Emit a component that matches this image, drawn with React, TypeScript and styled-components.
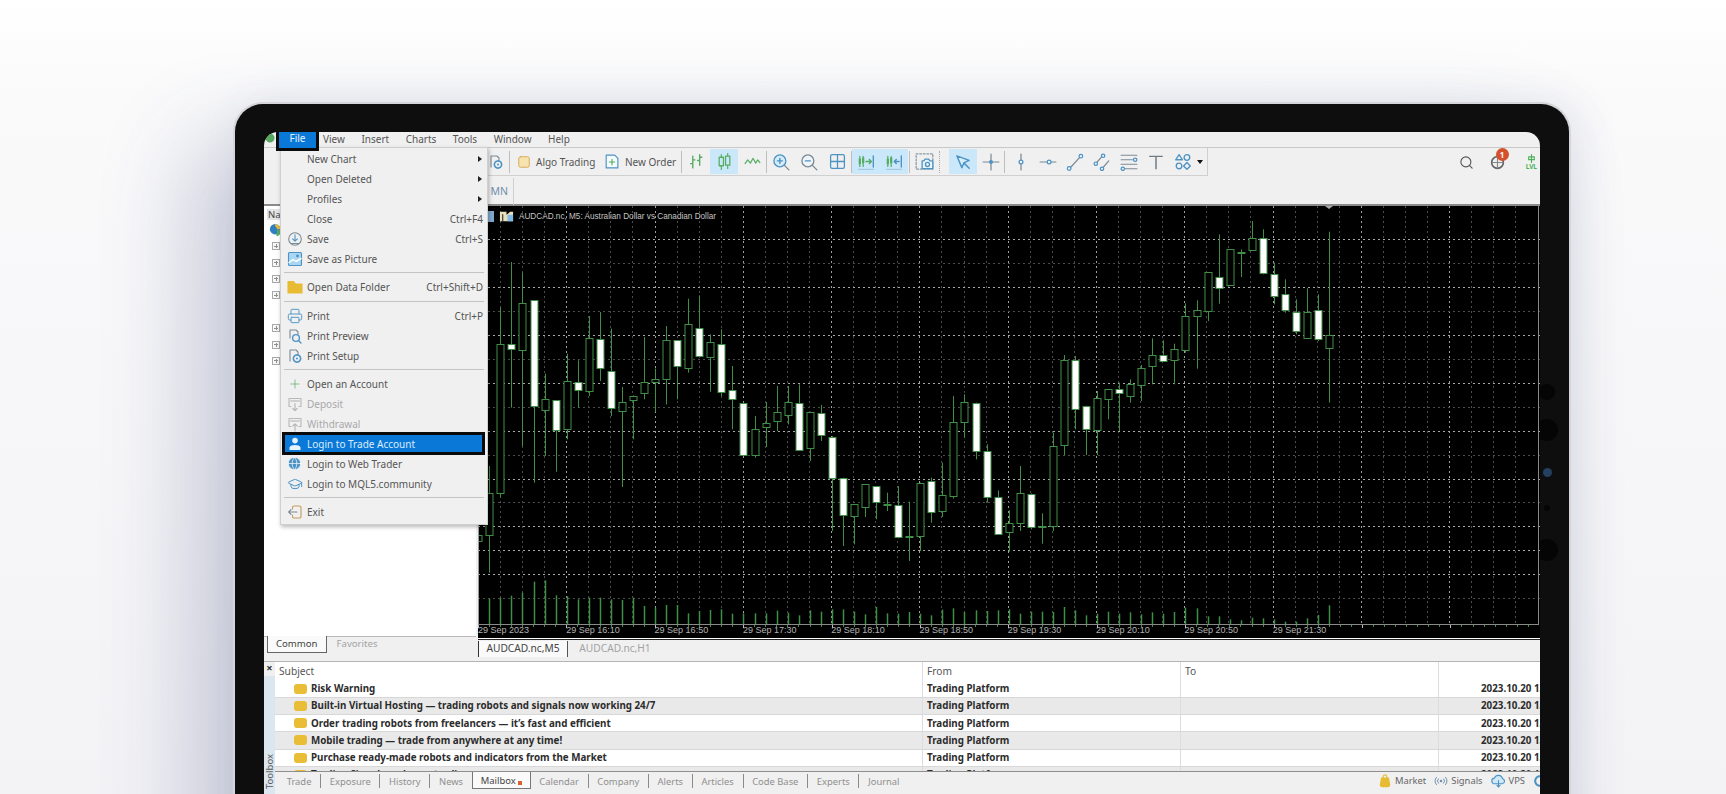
import React, { FC, ReactNode } from 'react'
import styled, { createGlobalStyle } from 'styled-components'
import { Globe, GraduationCap, Plus, Printer, Search } from 'lucide-react'

const UI_FONT = '"Noto Sans", "Open Sans", sans-serif'

const GlobalStyle = createGlobalStyle`
  html, body {
    margin: 0;
    height: 100%;
    overflow: hidden;
    background: #fff;
  }
  * { box-sizing: border-box; }
`

const Page = styled.div`
  width: 1726px;
  height: 794px;
  overflow: hidden;
  padding: 102px 0 0 233px;
  background: linear-gradient(180deg, #ffffff 0%, #fafafb 12%, #f3f3f6 100%);
  font-family: ${UI_FONT};
`

const Device = styled.div`
  position: relative;
  width: 1338px;
  height: 760px;
  padding: 28px 29px 0 29px;
  background: #0e0e0e;
  border: 2px solid #d6d6da;
  border-bottom: 0;
  border-radius: 30px 30px 0 0;
  box-shadow: -40px 40px 90px rgba(70, 80, 130, 0.28), 10px 0 40px rgba(70, 80, 130, 0.1);
`

const BezelDot = styled.span<{ $top: number; $size: number; $blue?: boolean }>`
  position: absolute;
  top: ${p => p.$top}px;
  left: ${p => 1312 - p.$size / 2}px;
  width: ${p => p.$size}px;
  height: ${p => p.$size}px;
  border-radius: 50%;
  background: ${p => (p.$blue ? '#24405e' : '#050505')};
`

const Screen = styled.div`
  position: relative;
  width: 1276px;
  height: 662px;
  display: flex;
  flex-direction: column;
  overflow: hidden;
  border-radius: 14px 14px 0 0;
  background: #f0f0f0;
`

/* menu bar */
const MenuBar = styled.div`
  height: 16px;
  display: flex;
  align-items: center;
  flex: none;
  padding-bottom: 2px;
  border-bottom: 1px solid #c9c9c9;
  font-size: 10px;
  color: #555;
`

const AppLogo = styled.span`
  width: 12px;
  height: 15px;
  flex: none;
  background: radial-gradient(circle at 6px 7px, #58a861 0 4px, transparent 5px);
`

const FileItem = styled.span`
  width: 43px;
  height: 19px;
  flex: none;
  align-self: flex-start;
  position: relative;
  z-index: 3;
  display: flex;
  align-items: center;
  justify-content: center;
  padding-bottom: 4px;
  margin-right: 4px;
  background: #0a78d7;
  border: solid #0a0a0a;
  border-width: 0 3px 3px 3px;
  color: #e8f3fd;
`

const MenuLabel = styled.span`
  margin-right: 16.5px;
`

/* toolbars */
const Toolbar = styled.div`
  height: 30px;
  flex: none;
  display: flex;
  align-items: center;
  padding: 0 0 2px 218px;
  font-size: 10px;
  color: #555;
`

const ToolbarEnd = styled.span`
  height: 28px;
  width: 1px;
  margin-left: 1px;
  background: #cfcfcf;
`

const ToolGroup = styled.div`
  display: flex;
  align-items: center;
  height: 28px;
  border-bottom: 1px solid #d0d0d0;
`

const ToolButton = styled.span<{ $active?: boolean; $narrow?: boolean }>`
  width: ${p => (p.$narrow ? 27 : 28)}px;
  height: 25px;
  flex: none;
  display: flex;
  align-items: center;
  justify-content: center;
  background: ${p => (p.$active ? '#cbe8fb' : 'transparent')};
`

const ToolSep = styled.span<{ $gapLeft?: number; $gapRight?: number; $dotted?: boolean }>`
  width: 1px;
  height: 22px;
  flex: none;
  margin: 0 ${p => p.$gapRight ?? 0}px 0 ${p => p.$gapLeft ?? 0}px;
  background: ${p => (p.$dotted ? 'transparent' : '#bdbdbd')};
  border-left: ${p => (p.$dotted ? '1px dotted #a8a8a8' : '0')};
`

const TextTool = styled.span<{ $width: number }>`
  width: ${p => p.$width}px;
  flex: none;
  display: flex;
  align-items: center;
  gap: 5px;
  white-space: nowrap;
`

const RightTools = styled.div`
  margin-left: auto;
  display: flex;
  align-items: center;
`

const Notify = styled.span`
  position: relative;
  width: 17px;
  height: 17px;
  margin: 0 20px 0 15px;
  display: flex;
`

const Badge = styled.span`
  position: absolute;
  top: -6px;
  left: 7px;
  width: 13px;
  height: 13px;
  border-radius: 50%;
  background: #d4512c;
  color: #fff;
  font-size: 8px;
  font-weight: 700;
  line-height: 13px;
  text-align: center;
`

const Level = styled.span`
  display: flex;
  flex-direction: column;
  align-items: center;
  margin-right: 3px;
  font-size: 6.5px;
  line-height: 7px;
  font-weight: 700;
  color: #4bb05a;
`

const PeriodBar = styled.div`
  height: 28px;
  flex: none;
  display: flex;
  align-items: center;
  border-bottom: 2px solid #8a8a8a;
  font-size: 10.5px;
  color: #6f8fae;
`

const PeriodSlot = styled.span<{ $width: number }>`
  width: ${p => p.$width}px;
  flex: none;
  text-align: right;
`

const PeriodDivider = styled.span`
  width: 1px;
  height: 27px;
  margin-left: 5px;
  background: #cfcfcf;
`

/* navigator */
const Workspace = styled.div`
  height: 455px;
  flex: none;
  display: flex;
`

const Navigator = styled.div`
  width: 214px;
  flex: none;
  display: flex;
  flex-direction: column;
  padding-right: 2px;
`

const NavBody = styled.div`
  height: 430px;
  flex: none;
  padding-top: 3px;
  background: #fff;
`

const NavTitle = styled.div`
  width: 17px;
  height: 11px;
  margin: 0 0 1px 3px;
  padding-left: 1px;
  background: #e4e4e4;
  font-size: 9.5px;
  line-height: 11px;
  color: #444;
`

const NavRoot = styled.div`
  height: 17px;
  padding-left: 5px;
  display: flex;
  align-items: center;
`

const TreeRow = styled.div`
  height: 16.4px;
  padding-left: 8px;
  display: flex;
  align-items: center;
`

const PlusBox = styled.span`
  width: 8px;
  height: 8px;
  display: block;
  border: 1px solid #a9a9a9;
  background: linear-gradient(#8f8f8f, #8f8f8f) center / 4px 1px no-repeat,
    linear-gradient(#8f8f8f, #8f8f8f) center / 1px 4px no-repeat, #f7f7f7;
`

const NavTabs = styled.div`
  flex: 1;
  display: flex;
  align-items: flex-start;
  padding-left: 3px;
  font-size: 9.6px;
  color: #a3a3a3;
  background: linear-gradient(#b9b9b9, #b9b9b9) top / 100% 1px no-repeat;
`

const NavTab = styled.span<{ $active?: boolean }>`
  height: 17px;
  padding: 0 ${p => (p.$active ? 8 : 10)}px;
  line-height: 15px;
  background: ${p => (p.$active ? '#fafafa' : 'transparent')};
  color: ${p => (p.$active ? '#444' : '#a3a3a3')};
  border: ${p => (p.$active ? '1px solid #666' : '0')};
  border-top: 0;
`

/* chart */
const ChartColumn = styled.div`
  flex: 1;
  min-width: 0;
  display: flex;
  flex-direction: column;
`

const ChartFrame = styled.div`
  position: relative;
  height: 433px;
  flex: none;
  background: #000;
  border-bottom: 1px solid #fff;
`

const ChartSvg = styled.svg`
  display: block;
`

const ChartCaption = styled.div`
  position: absolute;
  top: 3px;
  left: 8px;
  display: flex;
  align-items: center;
  gap: 5px;
  font-family: 'Liberation Sans', Arial, sans-serif;
  font-size: 8.2px;
  color: #c4c4c4;
  white-space: nowrap;
`

const CaptionDoc = styled.span`
  width: 8px;
  height: 11px;
  background: #7fa8cf;
`

const ChartTabs = styled.div`
  flex: 1;
  display: flex;
  align-items: flex-start;
  border-top: 1px solid #222;
  padding-top: 1px;
  font-size: 10.2px;
  color: #a3a3a3;
`

const ChartTab = styled.span<{ $active?: boolean }>`
  width: ${p => (p.$active ? 90 : 94)}px;
  height: 16px;
  text-align: center;
  line-height: 15px;
  background: ${p => (p.$active ? '#fafafa' : 'transparent')};
  color: ${p => (p.$active ? '#444' : '#a3a3a3')};
  border-left: ${p => (p.$active ? '1px solid #333' : '0')};
  border-right: ${p => (p.$active ? '1px solid #555' : '0')};
`

/* toolbox */
const Toolbox = styled.div`
  flex: 1;
  display: flex;
  border-top: 1px solid #b4b4b4;
  min-height: 0;
`

const ToolboxStrip = styled.div`
  width: 11px;
  flex: none;
  display: flex;
  flex-direction: column;
  align-items: center;
  background: linear-gradient(#f0f0f0 14px, #dbe6ee 14px);
  color: #555;
`

const CloseMark = styled.span`
  font-size: 11px;
  line-height: 12px;
  font-weight: 700;
  color: #333;
`

const ToolboxTitle = styled.span`
  margin-top: auto;
  margin-bottom: 5px;
  writing-mode: vertical-rl;
  transform: rotate(180deg);
  font-size: 9.5px;
  line-height: 11px;
`

const ToolboxMain = styled.div`
  flex: 1;
  min-width: 0;
  display: flex;
  flex-direction: column;
`

const MailTable = styled.div`
  height: 110px;
  flex: none;
  overflow: hidden;
  background: #fff;
  border-bottom: 1px solid #8e8e8e;
`

const MailRow = styled.div<{ $shaded?: boolean; $head?: boolean }>`
  height: ${p => (p.$head ? 18.5 : 17.25)}px;
  display: grid;
  grid-template-columns: 647px 258px 258px 1fr;
  align-items: center;
  background: ${p => (p.$shaded ? '#e9e9e9' : '#fff')};
  border-bottom: ${p => (p.$head ? '0' : '1px solid #d8d8d8')};
  font-size: ${p => (p.$head ? 10.2 : 9.8)}px;
  font-weight: ${p => (p.$head ? 400 : 700)};
  color: ${p => (p.$head ? '#555' : '#2c2c2c')};
  white-space: nowrap;
`

const MailCell = styled.span<{ $rule?: boolean }>`
  height: 100%;
  display: flex;
  align-items: center;
  gap: 4px;
  padding-left: 4px;
  overflow: hidden;
  border-left: ${p => (p.$rule ? '1px solid #dcdce4' : '0')};
`

const Subject = styled(MailCell)`
  padding-left: 19px;
`

const DateCell = styled(MailCell)`
  padding-left: 42px;
`

const Envelope = styled.span`
  width: 13px;
  height: 10px;
  flex: none;
  border-radius: 3px;
  background: #e9bd35;
`

const BottomTabs = styled.div`
  height: 17px;
  flex: none;
  display: flex;
  align-items: flex-start;
  padding-left: 3px;
  font-size: 9.4px;
  color: #8f8f8f;
`

const BottomTab = styled.span<{ $active?: boolean; $rule?: boolean }>`
  height: ${p => (p.$active ? 17 : 14)}px;
  margin-top: ${p => (p.$active ? 0 : 2)}px;
  padding: 0 ${p => (p.$active ? 8 : 8.7)}px;
  display: flex;
  align-items: center;
  gap: 2px;
  line-height: 13px;
  background: ${p => (p.$active ? '#fafafa' : 'transparent')};
  color: ${p => (p.$active ? '#444' : '#8f8f8f')};
  border-right: ${p => (p.$rule ? '1px solid #8a8a8a' : '0')};
  ${p => p.$active && 'border: 1px solid #777; border-top: 0;'}
`

const NewMail = styled.span`
  width: 4px;
  height: 4px;
  margin-top: 6px;
  background: #d8612d;
`

const ServiceLinks = styled.div`
  margin: 1px -7px 0 auto;
  display: flex;
  align-items: center;
  color: #666;
`

const Service = styled.span`
  display: flex;
  align-items: center;
  gap: 3px;
  margin-right: 8px;
`

/* file menu */
const FileMenu = styled.div`
  position: absolute;
  z-index: 2;
  top: 15px;
  left: 16px;
  width: 208px;
  padding: 1px 0 2px;
  background: #f0f0f0;
  border: 1px solid #d0d0d0;
  box-shadow: 1px 2px 4px rgba(0, 0, 0, 0.28);
  font-size: 10px;
  color: #555;
`

const MenuRow = styled.div<{ $disabled?: boolean; $selected?: boolean }>`
  position: relative;
  height: 20px;
  display: flex;
  align-items: center;
  padding-left: 5px;
  padding-right: 4px;
  white-space: nowrap;
  color: ${p => (p.$selected ? '#dcecfb' : p.$disabled ? '#a9a9a9' : '#555')};
  ${p =>
    p.$selected &&
    `
    margin: -1.5px 2px -1.5px 1px;
    padding-left: 1px;
    padding-right: 2px;
    height: 23px;
    background: #0a78d7;
    border: 3px solid #0a0a0a;
  `}
`

const MenuIcon = styled.span`
  width: 17px;
  height: 17px;
  flex: none;
  margin-right: 4px;
  display: flex;
  align-items: center;
  justify-content: center;
`

const Shortcut = styled.span`
  margin-left: auto;
`

const Arrow = styled.span`
  margin-left: auto;
  margin-right: 1px;
  width: 0;
  height: 0;
  border-left: 4px solid #222;
  border-top: 3.5px solid transparent;
  border-bottom: 3.5px solid transparent;
`

const MenuRule = styled.div`
  height: 1px;
  margin: 3.3px 3px 4px 3px;
  background: #c4c4c4;
`

/* small drawings */
const BLUE = '#4d93c4'
const GREEN = '#55ad62'
const GREY = '#7d8a94'

const Icon: FC<{ size?: number; children: ReactNode }> = ({ size = 16, children }) => (
  <svg width={size} height={size} viewBox="0 0 16 16" fill="none" strokeWidth={1.1} strokeLinecap="round" strokeLinejoin="round">
    {children}
  </svg>
)

const SaveIcon = () => (
  <Icon>
    <circle cx="8" cy="8" r="6.3" stroke={GREY} />
    <path d="M8 3.8v6M5.6 7.8 8 10.2l2.4-2.4" stroke={BLUE} />
    <path d="M4 12.5h8" stroke={GREY} />
  </Icon>
)
const PictureIcon = () => (
  <Icon>
    <rect x="1.5" y="1.5" width="13" height="13" rx="1" fill="#a9d6f2" stroke={BLUE} />
    <path d="M2 11.5 6 8.5l3 2 5-3" stroke="#fff" strokeWidth="1.5" />
    <circle cx="10.5" cy="5" r="1.4" fill={BLUE} />
  </Icon>
)
const FolderIcon = () => (
  <Icon>
    <path d="M1 2.5h5.5L8.5 5H15v9H1z" fill="#e7bb33" stroke="#e7bb33" />
  </Icon>
)
const PreviewIcon = () => (
  <Icon>
    <path d="M3 10V2h6l2 2v2" stroke={GREY} />
    <circle cx="9" cy="10" r="3.4" stroke={BLUE} strokeWidth="1.4" />
    <path d="m11.5 12.5 2.5 2.5" stroke={BLUE} strokeWidth="1.4" />
  </Icon>
)
const SetupIcon = () => (
  <Icon>
    <path d="M3 13V2h6l2 2v2" stroke={GREY} />
    <circle cx="10" cy="10.5" r="3.6" stroke={BLUE} strokeWidth="1.6" strokeDasharray="1.7 .7" />
    <circle cx="10" cy="10.5" r="1" fill={BLUE} />
  </Icon>
)
const CashIcon: FC<{ up?: boolean }> = ({ up }) => (
  <Icon>
    <path d="M4 10.5H2v-8h12v8h-2" stroke="#b9b9b9" />
    <path d="M4 5h8" stroke="#cfcfcf" strokeWidth="2" />
    {up ? <path d="M8 15V8M5.8 10 8 7.8l2.2 2.2" stroke="#b5b5b5" /> : <path d="M8 7.5v7M5.8 12.5 8 14.7l2.2-2.2" stroke="#b5b5b5" />}
  </Icon>
)
const PersonIcon = () => (
  <Icon>
    <circle cx="8" cy="4.6" r="2.8" fill="#e6f2fc" />
    <path d="M2.5 14v-2.6C3.4 9.7 5 9 8 9s4.6 0.7 5.5 2.4V14z" fill="#e6f2fc" />
  </Icon>
)
const ExitIcon = () => (
  <Icon>
    <path d="M5.5 5V3.5A1.5 1.5 0 0 1 7 2h5.5A1.5 1.5 0 0 1 14 3.5v9a1.5 1.5 0 0 1-1.5 1.5H7a1.500 1.5 0 0 1-1.5-1.5V11" stroke="#c49a5c" />
    <path d="M10 8H1.8M4 5.7 1.7 8 4 10.3" stroke={GREY} />
  </Icon>
)

const Candles: FC<{ kind: 'bars' | 'candle' | 'line' }> = ({ kind }) => (
  <Icon size={17}>
    {kind === 'bars' && <path d="M4.5 3v11M2.5 10h2M4.5 6.5h2M11 1.5v10M9 7h2M11 4h2" stroke={GREEN} strokeWidth="1.3" />}
    {kind === 'candle' && (
      <>
        <path d="M5 1.5v14M11 .5v14" stroke={GREEN} />
        <rect x="3" y="4" width="4" height="8" fill="#cbe8fb" stroke={GREEN} strokeWidth="1.2" />
        <rect x="9" y="3" width="4" height="8.5" fill="#cbe8fb" stroke={GREEN} strokeWidth="1.2" />
      </>
    )}
    {kind === 'line' && <path d="m1 10 2.5-3.5L6 9.5 8.5 5 11 9.5l2-3 2 2.5" stroke={GREEN} strokeWidth="1.1" />}
  </Icon>
)
const ZoomIcon: FC<{ inward?: boolean }> = ({ inward }) => (
  <Icon size={18}>
    <circle cx="7" cy="7" r="5.3" stroke={inward ? BLUE : GREY} strokeWidth="1.2" fill={inward ? '#d6ecfa' : '#eef5fa'} />
    <path d="M4.8 7h4.4" stroke={BLUE} strokeWidth="1.3" />
    {inward && <path d="M7 4.8v4.4" stroke={BLUE} strokeWidth="1.3" />}
    <path d="m11 11 4 4" stroke={GREY} strokeWidth="1.2" />
  </Icon>
)
const TileIcon = () => (
  <Icon size={17}>
    <rect x="1.5" y="1.5" width="13" height="13" rx="1.5" stroke={BLUE} strokeWidth="1.2" />
    <path d="M8 1.5v13M1.5 8h13" stroke={BLUE} strokeWidth="1.2" />
  </Icon>
)
const ShiftIcon: FC<{ back?: boolean }> = ({ back }) => (
  <Icon size={18}>
    <path d="M2.5 3v9M5.5 3v9" stroke={GREEN} />
    <rect x="1.5" y="5" width="2" height="5" fill={GREEN} />
    <rect x="4.5" y="4" width="2" height="5" fill={GREEN} />
    <path d="M14.5 2.5v10" stroke={BLUE} strokeWidth="1.2" />
    {back ? <path d="M8.5 7.5h4M10 5.7 8.2 7.5l1.8 1.8" stroke={BLUE} strokeWidth="1.3" /> : <path d="M8 7.5h4.5M11 5.7l1.8 1.8L11 9.3" stroke={GREEN} strokeWidth="1.3" />}
    <path d="M1.5 14.5h13" stroke="#9fc6de" strokeDasharray="1 1" />
  </Icon>
)
const CameraIcon = () => (
  <Icon size={19}>
    <rect x="1" y="1.5" width="14" height="13" stroke="#8a9aa5" strokeDasharray="1.5 1.5" />
    <path d="M6 7.5h1.5L8.5 6h3l1 1.5H15V14H6z" fill="#eaf4fb" stroke={BLUE} />
    <circle cx="10.5" cy="10.5" r="1.7" stroke={BLUE} />
  </Icon>
)
const PointerIcon = () => (
  <Icon size={18}>
    <path d="m2.5 2.5 11 4-4.500 2-2 4.500z" fill="#d7eefc" stroke={BLUE} strokeWidth="1.3" />
    <path d="m9 9 4.500 4.500" stroke={BLUE} strokeWidth="1.3" />
  </Icon>
)
const CrossIcon = () => (
  <Icon size={18}>
    <path d="M8 1v14M1 8h14" stroke={GREY} />
    <circle cx="8" cy="8" r="1.8" fill={BLUE} />
  </Icon>
)
const LineToolIcon: FC<{ kind: 'v' | 'h' | 'trend' | 'channel' | 'fib' | 'text' | 'shapes' }> = ({ kind }) => (
  <Icon size={18}>
    {kind === 'v' && (
      <>
        <path d="M8 1v14" stroke={GREY} />
        <circle cx="8" cy="8" r="1.7" fill="#eef5fa" stroke={BLUE} />
      </>
    )}
    {kind === 'h' && (
      <>
        <path d="M1 8h14" stroke={GREY} />
        <circle cx="9" cy="8" r="1.7" fill="#eef5fa" stroke={BLUE} />
      </>
    )}
    {kind === 'trend' && (
      <>
        <path d="m3 14 10-11" stroke={GREY} />
        <circle cx="2.8" cy="13.8" r="1.6" fill="#eef5fa" stroke={BLUE} />
        <circle cx="13.2" cy="2.8" r="1.6" fill="#eef5fa" stroke={BLUE} />
      </>
    )}
    {kind === 'channel' && (
      <>
        <path d="m2 10 6-7M8 14l6-7" stroke={GREY} />
        <circle cx="9" cy="2.5" r="1.5" fill="#eef5fa" stroke={BLUE} />
        <circle cx="2.5" cy="9.5" r="1.5" fill="#eef5fa" stroke={BLUE} />
        <circle cx="8" cy="14" r="1.5" fill="#eef5fa" stroke={BLUE} />
      </>
    )}
    {kind === 'fib' && (
      <>
        <path d="M1 2h14M1 6h10M1 10h14M4 14h11" stroke={GREY} />
        <circle cx="13.5" cy="6" r="1.5" fill="#eef5fa" stroke={BLUE} />
        <circle cx="2.5" cy="14" r="1.5" fill="#eef5fa" stroke={BLUE} />
      </>
    )}
    {kind === 'text' && <path d="M2.5 3h11M8 3v11" stroke="#6f7a82" strokeWidth="1.3" />}
    {kind === 'shapes' && (
      <>
        <path d="m4.5 1.5 3 4.5h-6z" stroke={BLUE} strokeWidth="1.2" />
        <circle cx="11.5" cy="4" r="2.5" stroke={BLUE} strokeWidth="1.2" />
        <circle cx="4.5" cy="11.5" r="2.5" stroke={BLUE} strokeWidth="1.2" />
        <path d="m11.5 8.5 3 3-3 3-3-3z" stroke={BLUE} strokeWidth="1.2" />
      </>
    )}
  </Icon>
)
const DropCaret = styled.span`
  width: 0;
  height: 0;
  margin: 0 3px 0 1px;
  border-top: 4px solid #111;
  border-left: 3.5px solid transparent;
  border-right: 3.5px solid transparent;
`

const MenuBagIcon = () => (
  <Icon size={14}>
    <path d="M6 4.5V3a2 2 0 0 1 4 0v1.5" stroke="#e7bb33" strokeWidth="1.3" />
    <path d="M3.5 4h9l1.500 8c0 2-1 3-3 3H5c-2 0-3-1-3-3z" fill="#e7bb33" />
  </Icon>
)
const SignalIcon = () => (
  <Icon size={14}>
    <circle cx="8" cy="8" r="1.4" fill="#6f8fae" />
    <path d="M5 5.5a3.5 3.5 0 0 0 0 5M11 5.5a3.5 3.5 0 0 1 0 5M2.8 3.8a6.5 6.5 0 0 0 0 8.400M13.200 3.800a6.500 6.500 0 0 1 0 8.400" stroke="#6f8fae" />
  </Icon>
)
const CloudIcon = () => (
  <Icon size={15}>
    <path d="M4 11.5a3 3 0 0 1-.3-6A4.5 4.5 0 0 1 12.3 6 2.8 2.8 0 0 1 12 11.5z" fill="#cfe8f8" stroke={BLUE} strokeWidth="1.2" />
    <path d="M8 8v7M6.2 13 8 15l1.8-2" stroke={BLUE} />
  </Icon>
)
const BlueGear = () => (
  <Icon size={14}>
    <circle cx="8" cy="8" r="5.5" stroke={BLUE} strokeWidth="2.4" strokeDasharray="2.4 1" />
  </Icon>
)
const NavGlobe = () => (
  <Icon size={14}>
    <circle cx="7" cy="7" r="6" fill="#2f7fc1" />
    <path d="M7 1a6 6 0 0 1 6 6H9C9 5 8 4 7 4z" fill="#e9bd35" />
    <path d="M9 8h5c0 4-2.5 7-5.5 7C8 13 10 11 9 8z" fill="#55ad62" />
  </Icon>
)
const CaptionIcons = () => (
  <Icon size={15}>
    <path d="M1 3h7v3l4-3h3v10H1z" fill="#e8e0bd" />
    <path d="M9 6h6v7H9z" fill="#7fbbe6" />
    <path d="M4 6v7" stroke="#222" />
  </Icon>
)

/* chart data, read from the picture: [high, bodyTop, bodyBottom, low, white body] in 3x zoom units */
type Candle = [number, number, number, number, number]

const CANDLES: Candle[] = [
  [1000, 1003, 1020, 1040, 0],
  [795, 875, 1000, 1115, 0],
  [320, 428, 875, 890, 0],
  [183, 428, 443, 620, 1],
  [215, 305, 445, 735, 0],
  [298, 298, 615, 845, 1],
  [518, 593, 627, 765, 0],
  [597, 597, 688, 812, 1],
  [458, 540, 683, 715, 0],
  [478, 544, 568, 620, 1],
  [345, 412, 572, 585, 0],
  [333, 414, 501, 540, 1],
  [383, 510, 620, 645, 1],
  [558, 602, 628, 858, 0],
  [583, 584, 597, 715, 0],
  [408, 543, 577, 595, 0],
  [503, 535, 545, 632, 0],
  [375, 418, 535, 610, 0],
  [418, 418, 495, 595, 1],
  [293, 370, 502, 515, 0],
  [283, 381, 466, 466, 1],
  [400, 422, 466, 572, 0],
  [385, 428, 572, 585, 1],
  [495, 568, 596, 685, 1],
  [605, 605, 760, 760, 1],
  [645, 683, 760, 770, 0],
  [603, 665, 677, 738, 0],
  [555, 633, 660, 690, 0],
  [555, 602, 640, 670, 0],
  [550, 605, 745, 748, 1],
  [632, 632, 740, 780, 0],
  [612, 635, 702, 720, 1],
  [705, 707, 830, 990, 1],
  [830, 830, 942, 1035, 1],
  [910, 910, 947, 1030, 0],
  [850, 850, 920, 948, 0],
  [855, 855, 903, 955, 1],
  [875, 908, 912, 930, 1],
  [855, 913, 1008, 1012, 1],
  [902, 1006, 1009, 1080, 0],
  [845, 845, 1005, 1050, 0],
  [830, 840, 932, 965, 1],
  [785, 883, 932, 948, 0],
  [585, 663, 885, 893, 0],
  [580, 604, 665, 710, 0],
  [605, 605, 750, 775, 1],
  [730, 750, 888, 905, 1],
  [868, 888, 998, 1000, 1],
  [928, 967, 993, 1052, 0],
  [795, 877, 968, 990, 0],
  [877, 878, 978, 985, 1],
  [937, 975, 979, 1028, 0],
  [695, 735, 974, 990, 0],
  [462, 478, 733, 762, 0],
  [465, 478, 625, 685, 1],
  [614, 614, 684, 762, 1],
  [570, 592, 688, 762, 0],
  [565, 565, 595, 655, 0],
  [545, 565, 577, 690, 1],
  [535, 550, 587, 605, 0],
  [492, 502, 552, 600, 0],
  [412, 463, 495, 550, 0],
  [418, 462, 481, 482, 1],
  [428, 445, 478, 550, 0],
  [307, 345, 447, 455, 0],
  [298, 326, 343, 503, 0],
  [214, 214, 331, 360, 0],
  [100, 228, 261, 308, 1],
  [145, 145, 252, 252, 0],
  [145, 154, 157, 228, 0],
  [60, 110, 147, 150, 0],
  [85, 112, 218, 220, 1],
  [185, 218, 283, 310, 1],
  [235, 280, 327, 335, 1],
  [295, 332, 388, 400, 1],
  [262, 332, 410, 410, 0],
  [280, 327, 413, 420, 1],
  [92, 403, 443, 605, 0],
]

const VOLUMES = [
  1193, 1190, 1184, 1175, 1142, 1138, 1183, 1186, 1195, 1190, 1190, 1195, 1197, 1190, 1215, 1220, 1212, 1212, 1237, 1230,
  1227, 1225, 1238, 1237, 1237, 1237, 1229, 1235, 1243, 1228, 1232, 1225, 1225, 1232, 1240, 1218, 1237, 1238, 1233, 1238,
  1243, 1226, 1222, 1233, 1228, 1230, 1228, 1225, 1238, 1232, 1232, 1233, 1218, 1228, 1243, 1238, 1232, 1238, 1234, 1240,
  1234, 1238, 1233, 1220, 1222, 1246, 1246, 1255, 1258, 1250, 1252, 1255, 1262, 1262, 1252, 1242, 1213,
]

const TIME_LABELS = ['29 Sep 2023', '29 Sep 16:10', '29 Sep 16:50', '29 Sep 17:30', '29 Sep 18:10', '29 Sep 18:50', '29 Sep 19:30', '29 Sep 20:10', '29 Sep 20:50', '29 Sep 21:30']

const CHART_WIDTH = 1062
const CHART_HEIGHT = 432
const AXIS_Y = 418
const CANDLE_STEP = 11.05
const GRID_STEP = 22.07
const LINE = '#3f8f47'

const toY = (v: number) => v / 3 - 5
const candleX = (i: number) => Math.round(11.3 + CANDLE_STEP * i) + 0.5

const PriceChart: FC = () => {
  const verticals = Array.from({ length: 48 }, (_, k) => k)
  const horizontals = Array.from({ length: 16 }, (_, k) => k)
  const ticks = Array.from({ length: 96 }, (_, k) => k)
  return (
    <ChartSvg width={CHART_WIDTH} height={CHART_HEIGHT} viewBox={`0 0 ${CHART_WIDTH} ${CHART_HEIGHT}`}>
      {verticals.map(k => {
        const x = Math.round(GRID_STEP * k) + 0.5
        return <line key={k} x1={x} x2={x} y1={0} y2={AXIS_Y} stroke={k % 4 === 0 ? '#a0a0a0' : '#4c4c4c'} strokeDasharray="2 3" />
      })}
      {horizontals.map(k => {
        const y = Math.round(33 + 23.95 * k) + 0.5
        const bright = k % 2 === 0 || k === 13
        return <line key={k} x1={0} x2={CHART_WIDTH} y1={y} y2={y} stroke={bright ? '#a8a8a8' : '#4c4c4c'} strokeDasharray="2 3" />
      })}
      {VOLUMES.map((v, i) => (
        <line key={i} x1={candleX(i)} x2={candleX(i)} y1={AXIS_Y} y2={toY(v)} stroke={LINE} strokeWidth={1.5} />
      ))}
      {CANDLES.map(([hi, top, bottom, lo, white], n) => {
        const x = candleX(n - 1)
        return (
          <g key={n}>
            <line x1={x} x2={x} y1={toY(hi)} y2={toY(lo)} stroke={LINE} />
            <rect
              x={x - 3.5}
              y={Math.round(toY(top)) + 0.5}
              width={7}
              height={Math.max(1, Math.round((bottom - top) / 3))}
              fill={white ? '#fff' : '#000'}
              stroke={LINE}
            />
          </g>
        )
      })}
      <line x1={0.5} x2={0.5} y1={0} y2={AXIS_Y} stroke="#9a9a9a" />
      <line x1={1060.5} x2={1060.5} y1={0} y2={AXIS_Y} stroke="#8a8a8a" />
      <line x1={0} x2={1061} y1={AXIS_Y + 0.5} y2={AXIS_Y + 0.5} stroke="#8a8a8a" />
      {ticks.map(k => {
        const x = Math.round(CANDLE_STEP * k) + 0.5
        return <line key={k} x1={x} x2={x} y1={AXIS_Y + 1} y2={AXIS_Y + (k % 8 === 0 ? 4 : 3)} stroke={k % 8 === 0 ? '#bdbdbd' : LINE} />
      })}
      <path d="M847 0h8l-4 3z" fill="#a9a9a9" />
      {TIME_LABELS.map((label, k) => (
        <text key={label} x={88.3 * k} y={427} fill="#b4b4b4" fontFamily="'Liberation Sans', Arial, sans-serif" fontSize={9}>
          {label}
        </text>
      ))}
    </ChartSvg>
  )
}

type MenuEntry = {
  label: string
  icon?: ReactNode
  shortcut?: string
  more?: boolean
  disabled?: boolean
  selected?: boolean
  ruleAfter?: boolean
}

const MENU_ITEMS: MenuEntry[] = [
  { label: 'New Chart', more: true },
  { label: 'Open Deleted', more: true },
  { label: 'Profiles', more: true },
  { label: 'Close', shortcut: 'Ctrl+F4' },
  { label: 'Save', shortcut: 'Ctrl+S', icon: <SaveIcon /> },
  { label: 'Save as Picture', icon: <PictureIcon />, ruleAfter: true },
  { label: 'Open Data Folder', shortcut: 'Ctrl+Shift+D', icon: <FolderIcon />, ruleAfter: true },
  { label: 'Print', shortcut: 'Ctrl+P', icon: <Printer size={16} color={BLUE} strokeWidth={1.4} /> },
  { label: 'Print Preview', icon: <PreviewIcon /> },
  { label: 'Print Setup', icon: <SetupIcon />, ruleAfter: true },
  { label: 'Open an Account', icon: <Plus size={14} color={GREEN} strokeWidth={1.2} /> },
  { label: 'Deposit', disabled: true, icon: <CashIcon /> },
  { label: 'Withdrawal', disabled: true, icon: <CashIcon up /> },
  { label: 'Login to Trade Account', selected: true, icon: <PersonIcon /> },
  { label: 'Login to Web Trader', icon: <Globe size={15} color="#fff" fill={BLUE} strokeWidth={1.1} /> },
  { label: 'Login to MQL5.community', icon: <GraduationCap size={16} color={BLUE} strokeWidth={1.5} />, ruleAfter: true },
  { label: 'Exit', icon: <ExitIcon /> },
]

const MAIL_SUBJECTS = [
  'Risk Warning',
  'Built-in Virtual Hosting — trading robots and signals now working 24/7',
  'Order trading robots from freelancers — it’s fast and efficient',
  'Mobile trading — trade from anywhere at any time!',
  'Purchase ready-made robots and indicators from the Market',
  'Trading Signals and copy trading',
]

const BOTTOM_TABS = ['Trade', 'Exposure', 'History', 'News', 'Mailbox', 'Calendar', 'Company', 'Alerts', 'Articles', 'Code Base', 'Experts', 'Journal']

const FileMenuPanel: FC = () => (
  <FileMenu>
    {MENU_ITEMS.map(item => (
      <React.Fragment key={item.label}>
        <MenuRow $disabled={item.disabled} $selected={item.selected}>
          <MenuIcon>{item.icon}</MenuIcon>
          {item.label}
          {item.shortcut && <Shortcut>{item.shortcut}</Shortcut>}
          {item.more && <Arrow />}
        </MenuRow>
        {item.ruleAfter && <MenuRule />}
      </React.Fragment>
    ))}
  </FileMenu>
)

const MainToolbar: FC = () => (
  <Toolbar>
    <ToolGroup>
      <ToolButton $narrow>
        <SetupIcon />
      </ToolButton>
      <ToolSep $gapRight={7} />
      <TextTool $width={86}>
        <Icon size={14}>
          <rect x="2" y="2" width="12" height="12" rx="2" fill="#f7e3b0" stroke="#d5aa55" />
        </Icon>
        Algo Trading
      </TextTool>
      <TextTool $width={78}>
        <Icon size={17}>
          <path d="M3 2h8l3 3v9H3z" fill="#f5fafd" stroke={BLUE} />
          <path d="M8.5 6v5M6 8.5h5" stroke={GREEN} />
        </Icon>
        New Order
      </TextTool>
      <ToolSep />
      <ToolButton><Candles kind="bars" /></ToolButton>
      <ToolButton $active><Candles kind="candle" /></ToolButton>
      <ToolButton><Candles kind="line" /></ToolButton>
      <ToolSep />
      <ToolButton><ZoomIcon inward /></ToolButton>
      <ToolButton><ZoomIcon /></ToolButton>
      <ToolButton><TileIcon /></ToolButton>
      <ToolSep />
      <ToolButton $active><ShiftIcon /></ToolButton>
      <ToolButton $active><ShiftIcon back /></ToolButton>
      <ToolSep $gapLeft={1} />
      <ToolButton><CameraIcon /></ToolButton>
      <ToolSep $gapLeft={1} $gapRight={9} $dotted />
      <ToolButton $active><PointerIcon /></ToolButton>
      <ToolButton $narrow><CrossIcon /></ToolButton>
      <ToolSep $gapRight={2} />
      <ToolButton $narrow><LineToolIcon kind="v" /></ToolButton>
      <ToolButton $narrow><LineToolIcon kind="h" /></ToolButton>
      <ToolButton $narrow><LineToolIcon kind="trend" /></ToolButton>
      <ToolButton $narrow><LineToolIcon kind="channel" /></ToolButton>
      <ToolButton $narrow><LineToolIcon kind="fib" /></ToolButton>
      <ToolButton $narrow><LineToolIcon kind="text" /></ToolButton>
      <ToolButton $narrow><LineToolIcon kind="shapes" /></ToolButton>
      <DropCaret />
      <ToolbarEnd />
    </ToolGroup>
    <RightTools>
      <Search size={15} color="#555" strokeWidth={1.8} />
      <Notify>
        <Icon size={17}>
          <circle cx="8" cy="8" r="5.5" stroke="#666" strokeWidth="1.6" />
          <path d="M8 3v10M3 8h10" stroke="#888" />
        </Icon>
        <Badge>1</Badge>
      </Notify>
      <Level>
        <Icon size={9}>
          <path d="M8 1v14M3 5h10v5H3z" stroke="#4bb05a" strokeWidth="2" />
        </Icon>
        LVL
      </Level>
    </RightTools>
  </Toolbar>
)

const App: FC = () => {
  const navRows = [0, 1, 2, 3, -1, 4, 5, 6]
  return (
    <>
      <GlobalStyle />
      <Page>
        <Device>
          <BezelDot $top={280} $size={16} />
          <BezelDot $top={315} $size={22} />
          <BezelDot $top={364} $size={9} $blue />
          <BezelDot $top={401} $size={6} />
          <BezelDot $top={435} $size={22} />
          <Screen>
            <MenuBar>
              <AppLogo />
              <FileItem>File</FileItem>
              <MenuLabel>View</MenuLabel>
              <MenuLabel>Insert</MenuLabel>
              <MenuLabel>Charts</MenuLabel>
              <MenuLabel>Tools</MenuLabel>
              <MenuLabel>Window</MenuLabel>
              <MenuLabel>Help</MenuLabel>
            </MenuBar>
            <MainToolbar />
            <PeriodBar>
              <PeriodSlot $width={244}>MN</PeriodSlot>
              <PeriodDivider />
            </PeriodBar>
            <Workspace>
              <Navigator>
                <NavBody>
                  <NavTitle>Na</NavTitle>
                  <NavRoot>
                    <NavGlobe />
                  </NavRoot>
                  {navRows.map(row => (
                    <TreeRow key={row}>{row >= 0 && <PlusBox />}</TreeRow>
                  ))}
                </NavBody>
                <NavTabs>
                  <NavTab $active>Common</NavTab>
                  <NavTab>Favorites</NavTab>
                </NavTabs>
              </Navigator>
              <ChartColumn>
                <ChartFrame>
                  <PriceChart />
                  <ChartCaption>
                    <CaptionDoc />
                    <CaptionIcons />
                    AUDCAD.nc, M5: Australian Dollar vs Canadian Dollar
                  </ChartCaption>
                </ChartFrame>
                <ChartTabs>
                  <ChartTab $active>AUDCAD.nc,M5</ChartTab>
                  <ChartTab>AUDCAD.nc,H1</ChartTab>
                </ChartTabs>
              </ChartColumn>
            </Workspace>
            <Toolbox>
              <ToolboxStrip>
                <CloseMark>×</CloseMark>
                <ToolboxTitle>Toolbox</ToolboxTitle>
              </ToolboxStrip>
              <ToolboxMain>
                <MailTable>
                  <MailRow $head>
                    <MailCell>Subject</MailCell>
                    <MailCell $rule>From</MailCell>
                    <MailCell $rule>To</MailCell>
                    <MailCell $rule />
                  </MailRow>
                  {MAIL_SUBJECTS.map((subject, i) => (
                    <MailRow key={subject} $shaded={i % 2 === 1}>
                      <Subject>
                        <Envelope />
                        {subject}
                      </Subject>
                      <MailCell $rule>Trading Platform</MailCell>
                      <MailCell $rule />
                      <DateCell $rule>2023.10.20 13:54</DateCell>
                    </MailRow>
                  ))}
                </MailTable>
                <BottomTabs>
                  {BOTTOM_TABS.map((tab, i) => (
                    <BottomTab key={tab} $active={tab === 'Mailbox'} $rule={tab !== 'News' && tab !== 'Mailbox' && i < BOTTOM_TABS.length - 1}>
                      {tab}
                      {tab === 'Mailbox' && <NewMail />}
                    </BottomTab>
                  ))}
                  <ServiceLinks>
                    <Service><MenuBagIcon />Market</Service>
                    <Service><SignalIcon />Signals</Service>
                    <Service><CloudIcon />VPS</Service>
                    <BlueGear />
                  </ServiceLinks>
                </BottomTabs>
              </ToolboxMain>
            </Toolbox>
            <FileMenuPanel />
          </Screen>
        </Device>
      </Page>
    </>
  )
}

export default App
